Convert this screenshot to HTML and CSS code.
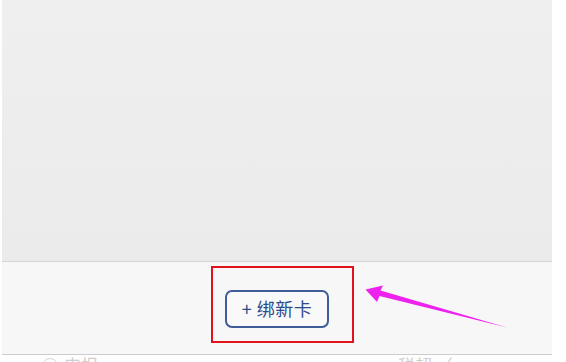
FILE: index.html
```html
<!DOCTYPE html>
<html lang="zh-CN">
<head>
<meta charset="utf-8">
<link rel="stylesheet" href="styles.css">
</head>
<body>
<div class="page">
  <div class="panel">
    <div class="content"></div>
    <div class="footer">
      <button class="bind-btn">+ 绑新卡</button>
    </div>
  </div>
  <div class="tabs">
    <span class="tab tab-left"><span class="tab-icon"></span>申报</span>
    <span class="tab tab-right">税超 〈</span>
  </div>
  <div class="highlight"></div>
  <svg class="arrow" width="566" height="362" viewBox="0 0 566 362">
    <polygon points="365.5,289.5 383,285.5 380.5,290.5 507,327.5 379.5,296 377,302" fill="#ee22ee"/>
  </svg>
</div>
</body>
</html>
```
FILE: styles.css
```css
html, body {
  margin: 0;
  padding: 0;
  background: #ffffff;
}
.page {
  position: relative;
  width: 566px;
  height: 362px;
  overflow: hidden;
  font-family: "Noto Sans CJK SC", "Noto Sans", sans-serif;
}
.panel {
  margin-left: 2px;
  width: 550px;
}
.content {
  height: 261px;
  background: linear-gradient(#efefef, #ebebeb);
}
.footer {
  height: 92px;
  border-top: 1px solid #d6d6d6;
  border-bottom: 1px solid #cccccc;
  background: #f7f7f7;
  display: flex;
  align-items: center;
  justify-content: center;
}
.bind-btn {
  box-sizing: border-box;
  width: 104px;
  height: 38px;
  margin-top: 2px;
  border: 2px solid #3e5d98;
  border-radius: 7px;
  background: #f9f9fa;
  color: #2b4c8a;
  font-family: "Noto Sans CJK SC", "Noto Sans", sans-serif;
  font-size: 18px;
  line-height: 1;
  padding: 0 0 2px 0;
  letter-spacing: 0.5px;
}
.tabs {
  display: flex;
  height: 8px;
  color: #cfcfcf;
  font-size: 17px;
  line-height: 20px;
}
.tab {
  display: flex;
  align-items: flex-start;
  gap: 6px;
}
.tab-left {
  margin-left: 42px;
}
.tab-icon {
  width: 14px;
  height: 14px;
  border: 1.5px solid #d4d4d4;
  border-radius: 50%;
  margin-top: 3px;
}
.tab-right {
  margin-left: 300px;
}
.highlight {
  position: absolute;
  left: 211px;
  top: 266px;
  width: 139px;
  height: 73px;
  border: 2px solid #e0131d;
}
.arrow {
  position: absolute;
  left: 0;
  top: 0;
}
```
